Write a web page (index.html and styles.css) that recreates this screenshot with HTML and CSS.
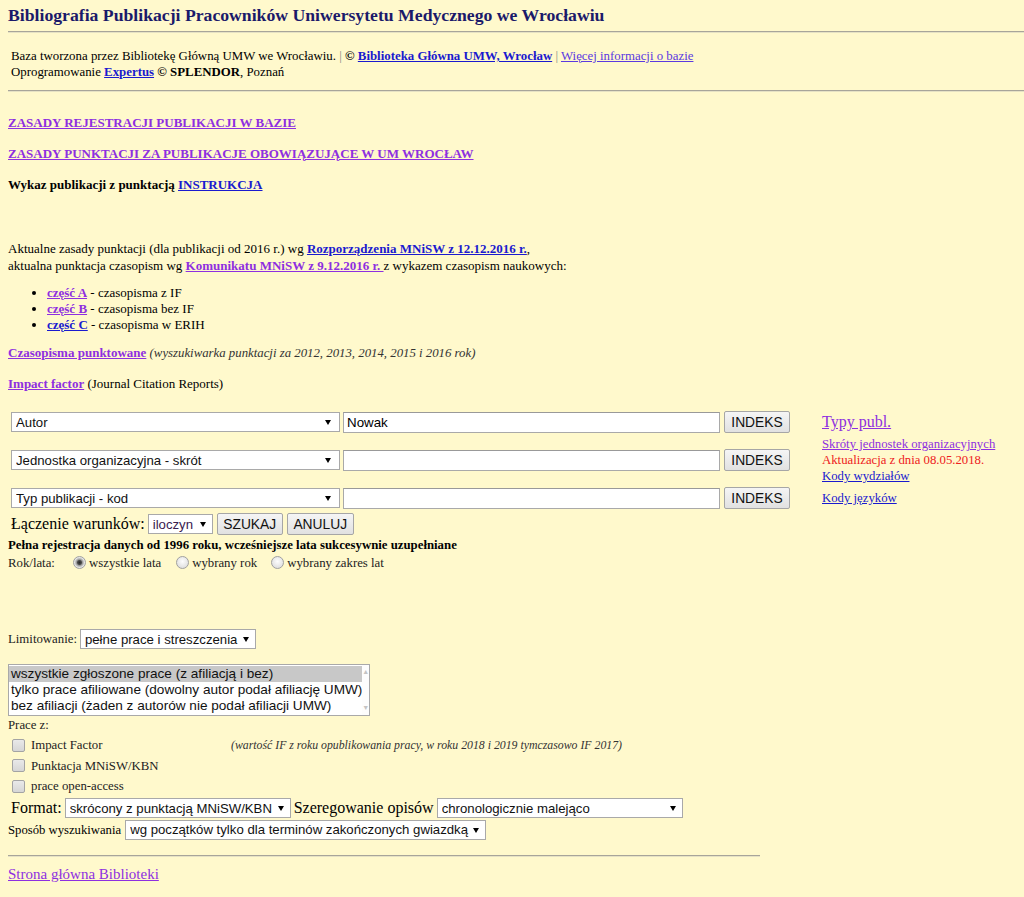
FILE: index.html
```html
<!DOCTYPE html>
<html lang="pl">
<head>
<meta charset="utf-8">
<title>Bibliografia Publikacji Pracowników UMW</title>
<link rel="stylesheet" href="styles.css">
</head>
<body>
<h1 class="title">Bibliografia Publikacji Pracowników Uniwersytetu Medycznego we Wrocławiu</h1>
<div class="rule"></div>
<div class="info">
  <div>Baza tworzona przez Bibliotekę Główną UMW we Wrocławiu. <span class="sep">|</span> <b>©</b> <a class="blue b" href="#">Biblioteka Główna UMW, Wrocław</a> <span class="sep">|</span> <a class="violet" href="#">Więcej informacji o bazie</a></div>
  <div>Oprogramowanie <a class="blue b" href="#">Expertus</a> <b>© SPLENDOR</b>, Poznań</div>
</div>
<div class="rule rule2"></div>

<p class="para first"><a class="purple b" href="#">ZASADY REJESTRACJI PUBLIKACJI W BAZIE</a></p>
<p class="para"><a class="purple b" href="#">ZASADY PUNKTACJI ZA PUBLIKACJE OBOWIĄZUJĄCE W UM WROCŁAW</a></p>
<p class="para"><b>Wykaz publikacji z punktacją</b> <a class="blue b" href="#">INSTRUKCJA</a></p>

<div class="rules-text">
  <div>Aktualne zasady punktacji (dla publikacji od 2016 r.) wg <a class="blue b" href="#">Rozporządzenia MNiSW z 12.12.2016 r.</a>,</div>
  <div>aktualna punktacja czasopism wg <a class="purple b" href="#">Komunikatu MNiSW z 9.12.2016 r. </a>z wykazem czasopism naukowych:</div>
</div>
<ul class="parts">
  <li><a class="purple b" href="#">część A</a> - czasopisma z IF</li>
  <li><a class="purple b" href="#">część B</a> - czasopisma bez IF</li>
  <li><a class="blue b" href="#">część C</a> - czasopisma w ERIH</li>
</ul>
<p class="para p-czas"><a class="purple b" href="#">Czasopisma punktowane</a> <i class="note">(wyszukiwarka punktacji za 2012, 2013, 2014, 2015 i 2016 rok)</i></p>
<p class="para"><a class="purple b" href="#">Impact factor</a> (Journal Citation Reports)</p>

<form class="search">
  <div class="grid">
    <span class="sel s-field"><select><option>Autor</option></select></span>
    <input class="txt" type="text" value="Nowak">
    <button class="btn b-idx" type="button">INDEKS</button>
    <div class="side"><a class="purple big" href="#">Typy publ.</a></div>

    <span class="sel s-field"><select><option>Jednostka organizacyjna - skrót</option></select></span>
    <input class="txt" type="text" value="">
    <button class="btn b-idx" type="button">INDEKS</button>
    <div class="side small"><a class="purple" href="#">Skróty jednostek organizacyjnych</a><br><span class="red">Aktualizacja z dnia 08.05.2018.</span><br><a class="blue" href="#">Kody wydziałów</a></div>

    <span class="sel s-field"><select><option>Typ publikacji - kod</option></select></span>
    <input class="txt" type="text" value="">
    <button class="btn b-idx" type="button">INDEKS</button>
    <div class="side small"><a class="blue" href="#">Kody języków</a></div>
  </div>

  <div class="row join">
    <span class="lbl16">Łączenie warunków:</span>
    <span class="sel s-join"><select><option>iloczyn</option></select></span>
    <button class="btn b-szukaj" type="button">SZUKAJ</button>
    <button class="btn b-anuluj" type="button">ANULUJ</button>
  </div>
  <div class="full">Pełna rejestracja danych od 1996 roku, wcześniejsze lata sukcesywnie uzupełniane</div>
  <div class="row years">
    <span class="yl">Rok/lata:</span>
    <label class="opt o1"><input class="radio" type="radio" name="r" checked> wszystkie lata</label>
    <label class="opt o2"><input class="radio" type="radio" name="r"> wybrany rok</label>
    <label class="opt o3"><input class="radio" type="radio" name="r"> wybrany zakres lat</label>
  </div>

  <div class="row limit">
    <span class="lbl13">Limitowanie:</span>
    <span class="sel s-limit"><select><option>pełne prace i streszczenia</option></select></span>
  </div>

  <div class="listbox">
    <div class="lb-opts">
      <div class="lb-opt selected">wszystkie zgłoszone prace (z afiliacją i bez)</div>
      <div class="lb-opt">tylko prace afiliowane (dowolny autor podał afiliację UMW)</div>
      <div class="lb-opt">bez afiliacji (żaden z autorów nie podał afiliacji UMW)</div>
    </div>
    <div class="lb-bar"><span class="arr">▲</span><span class="arr">▼</span></div>
  </div>

  <div class="prace">Prace z:</div>
  <div class="row chk first-chk"><label><input class="box" type="checkbox"> Impact Factor</label><i class="ifnote">(wartość IF z roku opublikowania pracy, w roku 2018 i 2019 tymczasowo IF 2017)</i></div>
  <div class="row chk"><label><input class="box" type="checkbox"> Punktacja MNiSW/KBN</label></div>
  <div class="row chk"><label><input class="box" type="checkbox"> prace open-access</label></div>

  <div class="row format">
    <span class="lbl16">Format:</span>
    <span class="sel s-format"><select><option>skrócony z punktacją MNiSW/KBN</option></select></span>
    <span class="lbl16">Szeregowanie opisów</span>
    <span class="sel s-order"><select><option>chronologicznie malejąco</option></select></span>
  </div>
  <div class="row mode">
    <span class="lbl-mode">Sposób wyszukiwania</span>
    <span class="sel s-mode"><select><option>wg początków tylko dla terminów zakończonych gwiazdką</option></select></span>
  </div>
</form>

<div class="rule rule-bottom"></div>
<p class="home"><a class="purple" href="#">Strona główna Biblioteki</a></p>
</body>
</html>
```

FILE: styles.css
```css
html, body {
  margin: 0;
  padding: 0;
}
body {
  padding-left: 8px;
  background: #fff9cc;
  font-family: "Liberation Serif", "Times New Roman", serif;
  font-size: 13px;
  line-height: 16px;
  color: #000;
}
a { text-decoration: underline; }
.b { font-weight: bold; }
.blue { color: #1a1acf; }
.purple { color: #8e2fe0; }
.violet { color: #5b3ae0; }
.red { color: #ee2020; }
.sep { color: #888; }

.title {
  margin: 0;
  padding-top: 4px;
  font-size: 17.7px;
  line-height: 22px;
  font-weight: bold;
  color: #1b1a6a;
}
.rule {
  height: 0;
  border-top: 1px solid #a8a59a;
  border-bottom: 1px solid #e6e2c4;
  margin-top: 5px;
}
.info {
  margin-top: 15px;
  padding-left: 3px;
  font-size: 12.85px;
}
.rule2 { margin-top: 10px; }

.para {
  margin: 15px 0 0;
}
.para.first { margin-top: 23px; }

.rules-text {
  margin-top: 47px;
  line-height: 17px;
}
.parts {
  margin: 11px 0 0;
  padding-left: 39px;
  list-style: disc;
}
.p-czas { margin-top: 12px; }
.note { color: #333; font-size: 12.8px; }

/* form */
.search { margin: 20px 0 0; }
.grid {
  display: grid;
  grid-template-columns: 332px 380px 70px auto;
  grid-auto-rows: 20px;
  row-gap: 18px;
  align-items: center;
}
.sel {
  position: relative;
  display: inline-block;
  height: 20px;
}
.sel select {
  -webkit-appearance: none;
  appearance: none;
  box-sizing: border-box;
  width: 100%;
  height: 100%;
  margin: 0;
  padding: 0 14px 0 4px;
  border: 1px solid #a9a9a9;
  border-radius: 0;
  background: #fff;
  font-family: "Liberation Sans", Arial, sans-serif;
  font-size: 13.2px;
  color: #111;
}
.sel::after {
  content: "";
  position: absolute;
  right: 7px;
  top: 8px;
  border-left: 3.5px solid transparent;
  border-right: 3.5px solid transparent;
  border-top: 5px solid #000;
  pointer-events: none;
}
.s-field { margin-left: 3px; width: 329px; }
.s-field::after { right: 9px; }
.txt {
  box-sizing: border-box;
  width: 377px;
  height: 21px;
  margin: 0 0 0 3px;
  padding: 0 3px;
  border: 1px solid #a9a9a9;
  border-top-color: #999;
  background: #fff;
  font-family: "Liberation Sans", Arial, sans-serif;
  font-size: 13.33px;
  color: #000;
}
.btn {
  box-sizing: border-box;
  height: 22px;
  margin: 0;
  padding: 0;
  border: 1px solid #a6a6a6;
  border-radius: 2px;
  background: linear-gradient(#f5f5f5, #e1e1e1);
  font-family: "Liberation Sans", Arial, sans-serif;
  font-size: 13.8px;
  color: #111;
}
.b-idx { width: 66px; margin-left: 4px; }
.side {
  margin-left: 32px;
  white-space: nowrap;
}
.side .big { font-size: 16px; line-height: 20px; }
.side.small { font-size: 12.75px; line-height: 16px; }

.row {
  display: flex;
  align-items: center;
}
.join {
  margin-top: 5px;
  height: 22px;
  padding-left: 3px;
}
.lbl16 {
  font-size: 16px;
  line-height: 20px;
}
.s-join { width: 65px; margin-left: 3px; height: 20px; }
.s-join select { color: #3a2050; }
.b-szukaj { width: 66px; margin-left: 4px; }
.b-anuluj { width: 67px; margin-left: 4px; }

.full {
  margin-top: 3px;
  font-size: 12.8px;
  line-height: 15px;
  font-weight: bold;
}
.years {
  height: 19px;
  font-size: 12.8px;
  color: #222;
}
.yl { width: 65px; }
.opt { display: inline-flex; align-items: center; }
.o2 { margin-left: 15px; }
.o3 { margin-left: 14px; }

.radio {
  -webkit-appearance: none;
  appearance: none;
  box-sizing: border-box;
  width: 13px;
  height: 13px;
  margin: 0 3px 0 0;
  border: 1px solid #a0a0a0;
  border-radius: 50%;
  background: radial-gradient(circle at 50% 40%, #fdfdfd 0, #e2e2e2 70%);
}
.radio:checked {
  background: radial-gradient(circle, #2a2a2a 0, #4a4a4a 2px, #9a9a9a 3px, #e6e6e6 5px);
}

.limit {
  margin-top: 57px;
  height: 20px;
}
.lbl13 { font-size: 12.8px; color: #222; }
.s-limit { width: 176px; margin-left: 3px; }

.listbox {
  display: flex;
  box-sizing: border-box;
  width: 362px;
  height: 52px;
  margin-top: 15px;
  border: 1px solid #a9a9a9;
  background: #fff;
  font-family: "Liberation Sans", Arial, sans-serif;
  font-size: 13.6px;
  line-height: 16px;
  color: #111;
}
.lb-opts { flex: 1; padding-top: 1px; }
.lb-opt { padding-left: 2px; white-space: nowrap; }
.lb-opt.selected { background: #c8c8c8; }
.lb-bar {
  width: 17px;
  display: flex;
  flex-direction: column;
  justify-content: space-between;
  align-items: center;
  background: #fdfdfd;
}
.arr { font-size: 7px; line-height: 14px; color: #c4c4c4; }

.prace {
  margin-top: 2px;
  font-size: 12.8px;
  line-height: 14px;
  color: #222;
}
.chk {
  height: 20.5px;
  font-size: 12.8px;
  color: #222;
}
.first-chk { margin-top: 3px; }
.chk label { display: inline-flex; align-items: center; width: 223px; }
.box {
  -webkit-appearance: none;
  appearance: none;
  box-sizing: border-box;
  width: 13px;
  height: 13px;
  margin: 0 6px 0 4px;
  border: 1px solid #a4a4a4;
  border-radius: 2px;
  background: linear-gradient(#e9e9e9, #d6d6d6);
}
.ifnote { font-size: 11.8px; color: #333; }

.format {
  height: 21px;
  margin-top: 1px;
  padding-left: 3px;
}
.s-format { width: 226px; margin: 0 3px 0 3px; }
.s-order { width: 246px; margin-left: 3px; }
.mode {
  height: 20px;
  margin-top: 1px;
}
.lbl-mode { font-size: 12.7px; }
.s-mode { width: 361px; margin-left: 4px; }

.rule-bottom {
  width: 752px;
  margin-top: 15px;
}
.home {
  margin: 8px 0 0;
  font-size: 15px;
  line-height: 18px;
}
```
